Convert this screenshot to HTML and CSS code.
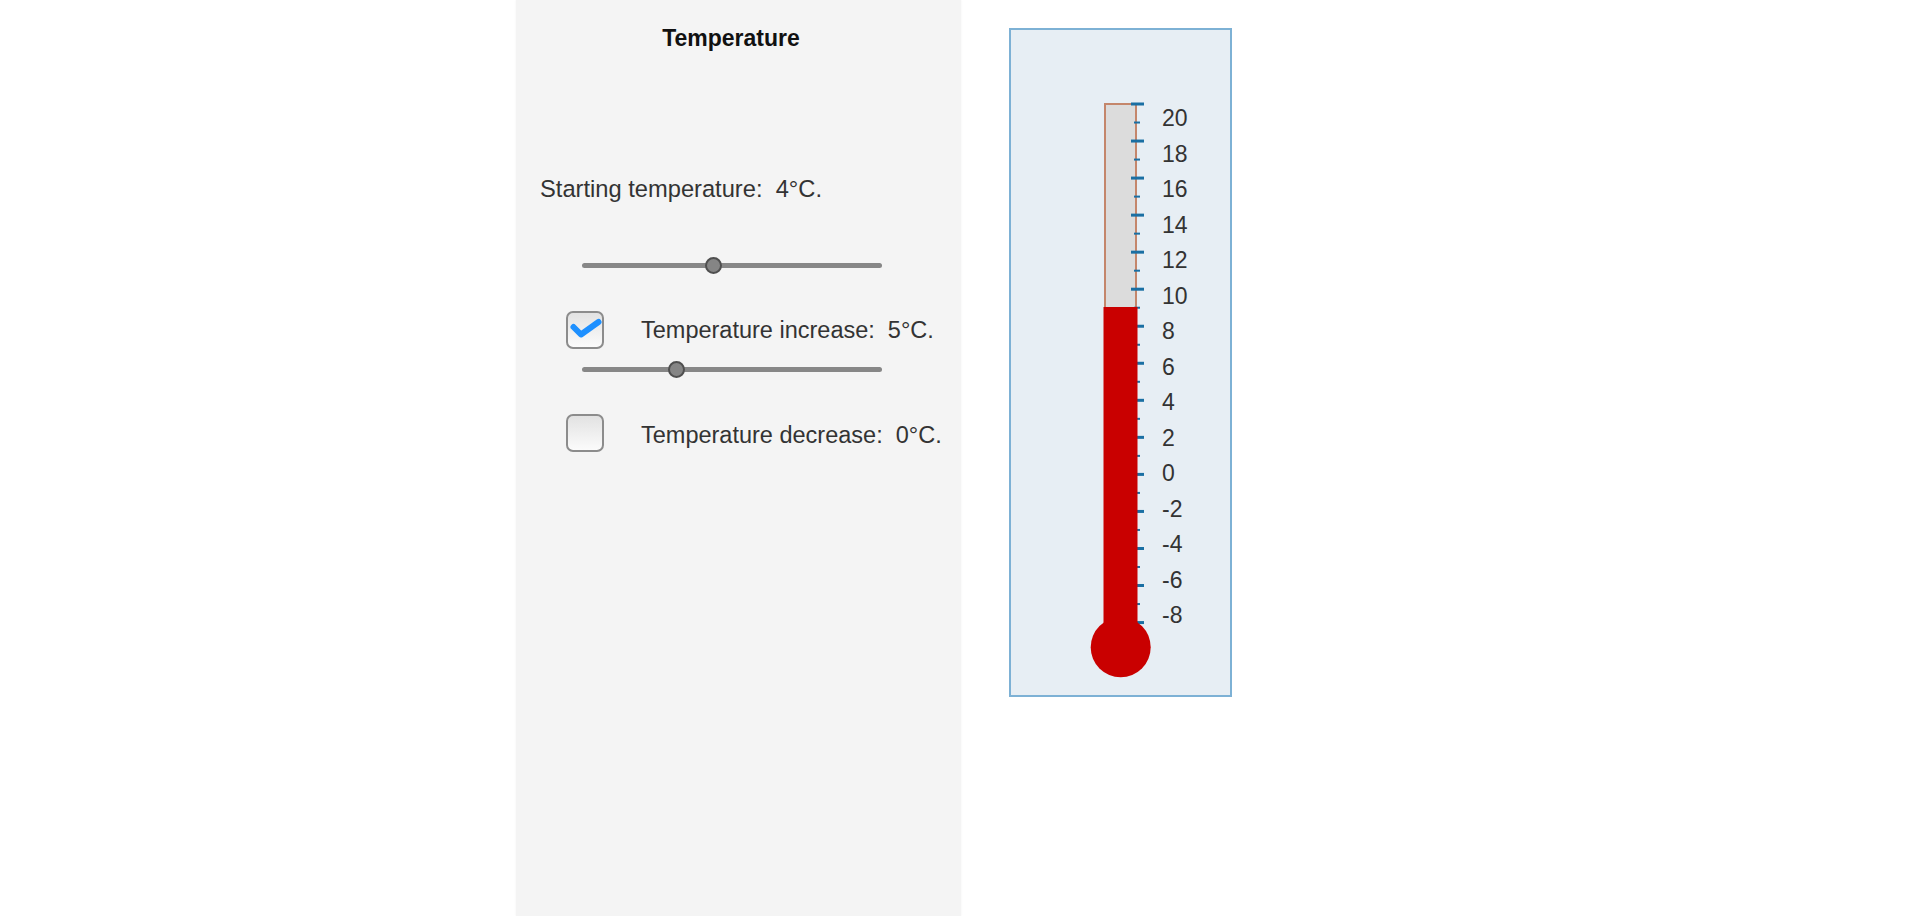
FILE: index.html
```html
<!DOCTYPE html>
<html lang="en">
<head>
<meta charset="utf-8">
<title>Temperature</title>
<link rel="stylesheet" href="styles.css">
</head>
<body>
<div class="app">
  <section class="panel">
    <h1 class="title">Temperature</h1>
    <p class="label start-label">Starting temperature:&nbsp; 4°C.</p>
    <div class="slider">
      <div class="track"></div>
      <div class="thumb" style="left: 131px"></div>
    </div>
    <div class="row row-first">
      <span class="check checked">
        <svg viewBox="0 0 38 38" width="38" height="38"><path d="M7.5 16 L15 23.5 L32.5 11" fill="none" stroke="#1e90ff" stroke-width="6" stroke-linecap="round" stroke-linejoin="round"/></svg>
      </span>
      <span class="label row-label">Temperature increase:&nbsp; 5°C.</span>
    </div>
    <div class="slider slider-second">
      <div class="track"></div>
      <div class="thumb" style="left: 94px"></div>
    </div>
    <div class="row row-second">
      <span class="check"></span>
      <span class="label row-label">Temperature decrease:&nbsp; 0°C.</span>
    </div>
  </section>

  <div class="gauge">
    <svg class="thermo" viewBox="0 0 219 665" width="219" height="665">
      <!-- empty glass -->
      <rect x="94" y="74" width="31" height="530" fill="#dcdcdc" stroke="#c4866b" stroke-width="2"/>
      <g id="ticks" stroke="#1a6fa3"></g>
      <!-- mercury column at 9°C, drawn over the ticks -->
      <rect x="92.5" y="277" width="34" height="330" fill="#c90000"/>
      <circle cx="109.7" cy="617.3" r="30" fill="#c90000"/>
      <g id="labels" font-family="'Liberation Sans', Arial, sans-serif" font-size="23" fill="#333"></g>
    </svg>
  </div>
</div>
<script src="scale.js"></script>
</body>
</html>
```

FILE: scale.js
```js
// Builds the thermometer scale: ticks every degree, labels every two.
(function () {
  var ns = 'http://www.w3.org/2000/svg';
  var ticks = document.getElementById('ticks');
  var labels = document.getElementById('labels');
  var tickTop = 74, tickStep = 18.52;
  var labelTop = 96, labelStep = 17.76;
  for (var v = 20; v >= -9; v--) {
    var y = tickTop + (20 - v) * tickStep;
    var line = document.createElementNS(ns, 'line');
    var major = v % 2 === 0;
    line.setAttribute('x1', major ? 120 : 123);
    line.setAttribute('x2', major ? 133 : 129);
    line.setAttribute('y1', y);
    line.setAttribute('y2', y);
    line.setAttribute('stroke-width', major ? 3 : 2);
    ticks.appendChild(line);
    if (major && v >= -8) {
      var t = document.createElementNS(ns, 'text');
      t.setAttribute('x', 151);
      t.setAttribute('y', labelTop + (20 - v) * labelStep);
      t.textContent = String(v);
      labels.appendChild(t);
    }
  }
})();
```

FILE: styles.css
```css
html, body {
  margin: 0;
  padding: 0;
  background: #fff;
}

body {
  font-family: "Liberation Sans", Arial, sans-serif;
  color: #333;
}

.app {
  display: flex;
  align-items: flex-start;
  padding-left: 516px;
}

.panel {
  width: 445px;
  height: 916px;
  box-sizing: border-box;
  background: #f4f4f4;
  padding: 25px 0 0 24px;
  box-shadow: 0 0 2px rgba(0, 0, 0, 0.06);
}

.title {
  margin: 0;
  padding-right: 39px;
  font-size: 23px;
  line-height: 26px;
  font-weight: bold;
  color: #111;
  text-align: center;
}

.label {
  font-size: 23.7px;
  line-height: 26px;
  color: #333;
  white-space: nowrap;
}

.row-label {
  font-size: 23.5px;
}

.start-label {
  margin: 125px 0 0 0;
}

.slider {
  position: relative;
  width: 300px;
  height: 20px;
  margin: 53px 0 0 42px;
}

.slider-second {
  margin-top: 10px;
}

.track {
  position: absolute;
  left: 0;
  right: 0;
  top: 7.5px;
  height: 5px;
  border-radius: 3px;
  background: #878787;
}

.thumb {
  position: absolute;
  top: 1.5px;
  width: 13px;
  height: 13px;
  margin-left: -8.5px;
  border-radius: 50%;
  background: #858585;
  border: 2px solid #4f4f4f;
}

.row {
  display: flex;
  align-items: center;
  margin-left: 26px;
}

.row-first {
  margin-top: 36px;
}

.row-second {
  margin-top: 35px;
}

.row-second .label {
  margin-top: 4px;
}

.check {
  display: block;
  width: 38px;
  height: 38px;
  box-sizing: border-box;
  border: 2px solid #8c8c8c;
  border-radius: 7px;
  background: linear-gradient(to bottom, #e2e2e2, #fbfbfb);
  margin-right: 37px;
  flex: none;
}

.check svg {
  display: block;
  margin: -2px 0 0 -2px;
}

.gauge {
  margin: 28px 0 0 48px;
  width: 223px;
  height: 669px;
  box-sizing: border-box;
  border: 2px solid #7db1d5;
  background: #e7eef4;
}

.thermo {
  display: block;
}
```
